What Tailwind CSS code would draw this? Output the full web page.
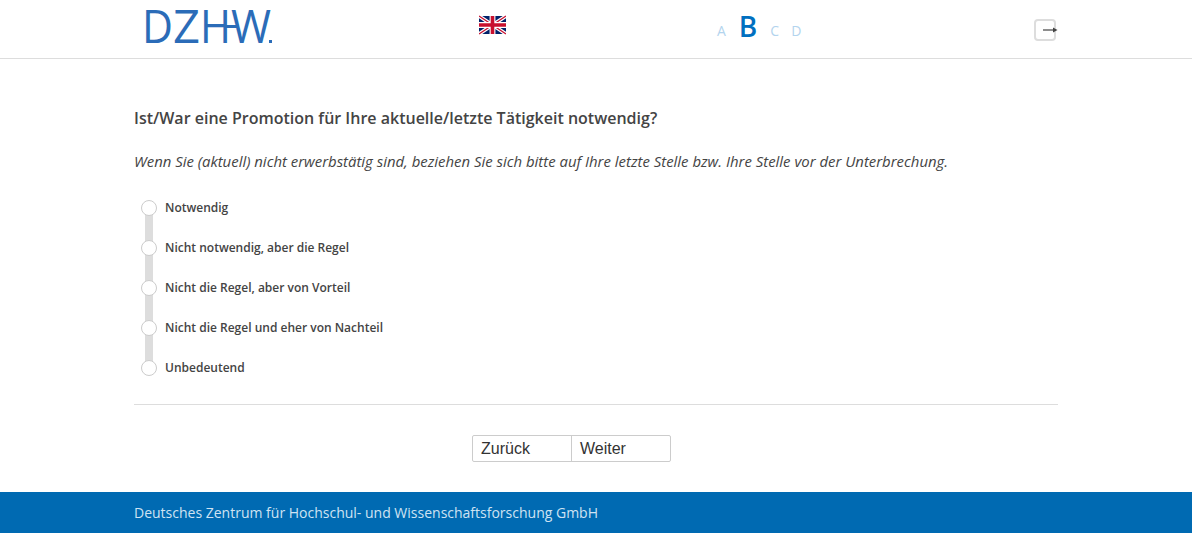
<!DOCTYPE html>
<html lang="de">
<head>
  <meta charset="UTF-8">
  <title>DZHW</title>
  <script src="https://cdn.jsdelivr.net/npm/@tailwindcss/browser@4"></script>
</head>
<body class="bg-white h-[542px] overflow-hidden font-['Open_Sans',sans-serif] text-[#444]">
  <!-- Header -->
  <header class="h-[59px] border-b border-[#ddd]">
    <div class="w-[924px] mx-auto h-[58px] flex relative">
      <svg class="ml-[8px] overflow-visible" width="136" height="56" viewBox="0 0 136 56" font-family="Open Sans" font-size="45" fill="#2b6cb8">
        <text x="0" y="43" textLength="31" lengthAdjust="spacingAndGlyphs">D</text>
        <text x="31" y="43" textLength="27" lengthAdjust="spacingAndGlyphs">Z</text>
        <text x="58" y="43" textLength="31" lengthAdjust="spacingAndGlyphs">H</text>
        <text x="89" y="43" textLength="40" lengthAdjust="spacingAndGlyphs">W</text>
        <rect x="84" y="25" width="12" height="3"/>
        <rect x="127" y="40" width="3" height="3"/>
      </svg>
      <svg class="absolute left-[345px] top-[15px]" width="27" height="20" viewBox="0 0 60 40">
        <rect width="60" height="40" fill="#012169"/>
        <path d="M0 0L60 40M60 0L0 40" stroke="#fff" stroke-width="8"/>
        <path d="M0 0L60 40M60 0L0 40" stroke="#c8102e" stroke-width="3"/>
        <path d="M30 0V40M0 20H60" stroke="#fff" stroke-width="13"/>
        <path d="M30 0V40M0 20H60" stroke="#c8102e" stroke-width="8"/>
      </svg>
      <div class="absolute left-[583px] top-[9px] h-[32px] flex items-end text-[14px] leading-[20px] text-[#b3d4ee]">
        <span>A</span>
        <span class="ml-[13px] text-[28px] leading-[36px] font-semibold text-[#0070c0] -mb-[3px]">B</span>
        <span class="ml-[13px]">C</span>
        <span class="ml-[12px]">D</span>
      </div>
      <div class="absolute left-[900px] top-[19px] w-[22px] h-[22px] rounded-[4px] border-2 border-[#ddd]"></div>
      <svg class="absolute left-[909px] top-[26px]" width="15" height="8" viewBox="0 0 15 8">
        <path d="M0 4H11" stroke="#444" stroke-width="1.2"/>
        <path d="M10 1.5L14.5 4L10 6.5Z" fill="#444"/>
      </svg>
    </div>
  </header>

  <main class="w-[924px] mx-auto">
    <h1 class="mt-[48px] text-[16px] leading-[22px] font-semibold">Ist/War eine Promotion für Ihre aktuelle/letzte Tätigkeit notwendig?</h1>
    <p class="mt-[22px] text-[14.92px] leading-[20px] italic">Wenn Sie (aktuell) nicht erwerbstätig sind, beziehen Sie sich bitte auf Ihre letzte Stelle bzw. Ihre Stelle vor der Unterbrechung.</p>

    <!-- Options -->
    <div class="mt-[29px] ml-[7px] relative flex flex-col">
      <div class="absolute left-[4px] top-[9px] w-[8px] h-[160px] bg-[#ddd]"></div>
      <label class="h-[40px] flex items-start relative"><span class="w-[16px] h-[16px] rounded-full bg-white border border-[#ccc]"></span><span class="ml-[8px] text-[12px] leading-[16px] font-semibold">Notwendig</span></label>
      <label class="h-[40px] flex items-start relative"><span class="w-[16px] h-[16px] rounded-full bg-white border border-[#ccc]"></span><span class="ml-[8px] text-[12px] leading-[16px] font-semibold">Nicht notwendig, aber die Regel</span></label>
      <label class="h-[40px] flex items-start relative"><span class="w-[16px] h-[16px] rounded-full bg-white border border-[#ccc]"></span><span class="ml-[8px] text-[12px] leading-[16px] font-semibold">Nicht die Regel, aber von Vorteil</span></label>
      <label class="h-[40px] flex items-start relative"><span class="w-[16px] h-[16px] rounded-full bg-white border border-[#ccc]"></span><span class="ml-[8px] text-[12px] leading-[16px] font-semibold">Nicht die Regel und eher von Nachteil</span></label>
      <label class="h-[16px] flex items-start relative"><span class="w-[16px] h-[16px] rounded-full bg-white border border-[#ccc]"></span><span class="ml-[8px] text-[12px] leading-[16px] font-semibold">Unbedeutend</span></label>
    </div>

    <hr class="mt-[28px] border-[#ddd]">

    <div class="mt-[30px] ml-[338px] flex font-['Liberation_Sans',sans-serif]">
      <div class="flex w-[199px] h-[27px] border border-[#ccc] rounded-[2px] text-[16px] leading-[25px] text-[#333]">
        <span class="w-[99px] pl-[8px] border-r border-[#ccc]">Zurück</span>
        <span class="pl-[8px]">Weiter</span>
      </div>
    </div>
  </main>

  <footer class="mt-[30px] h-[41px] bg-[#006ab2]">
    <div class="w-[924px] mx-auto text-[14px] leading-[41px] text-[#cfe3f3]">Deutsches Zentrum für Hochschul- und Wissenschaftsforschung GmbH</div>
  </footer>
</body>
</html>
